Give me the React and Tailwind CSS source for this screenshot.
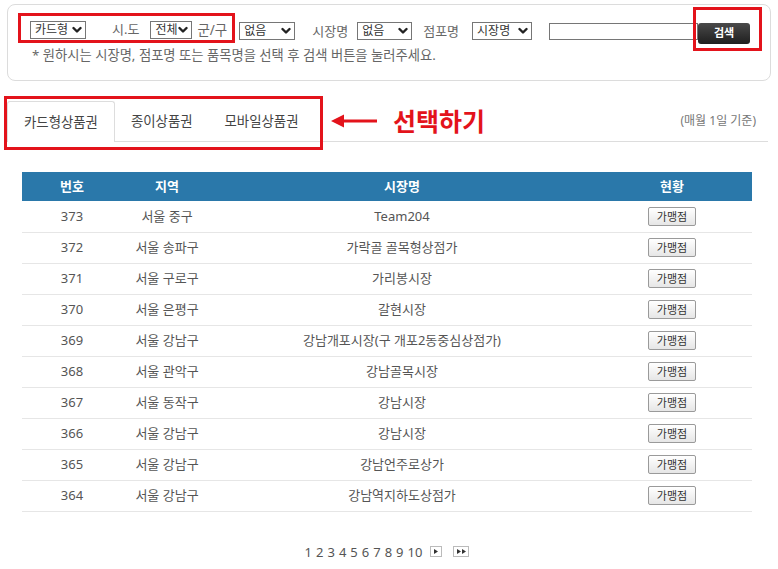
import { useState } from "react";

const rows = [
  [373, "서울 중구", "Team204"],
  [372, "서울 송파구", "가락골 골목형상점가"],
  [371, "서울 구로구", "가리봉시장"],
  [370, "서울 은평구", "갈현시장"],
  [369, "서울 강남구", "강남개포시장(구 개포2동중심상점가)"],
  [368, "서울 관악구", "강남골목시장"],
  [367, "서울 동작구", "강남시장"],
  [366, "서울 강남구", "강남시장"],
  [365, "서울 강남구", "강남언주로상가"],
  [364, "서울 강남구", "강남역지하도상점가"],
];

const Chevron = () => (
  <svg width="10" height="8" viewBox="0 0 10 8" className="shrink-0">
    <path d="M1.5 2 L5 5.5 L8.5 2" fill="none" stroke="#222" strokeWidth="2.4" strokeLinecap="round" strokeLinejoin="round" />
  </svg>
);

const FakeSelect = ({ width, label }) => (
  <div className={`flex h-[18px] items-center border border-[#767676] bg-white pr-[3px] ${width}`}>
    <span className="h-[16px] flex-1 overflow-hidden whitespace-nowrap pl-[4px] text-[12px] leading-[16px] text-[#333]">
      {label}
    </span>
    <Chevron />
  </div>
);

const tabs = ["카드형상품권", "종이상품권", "모바일상품권"];

export default function App() {
  const [active, setActive] = useState(0);

  return (
    <main
      className="min-h-screen w-[778px] bg-white text-[#555]"
      style={{ fontFamily: '"Noto Sans", "Noto Sans CJK KR", sans-serif' }}
    >
      {/* search panel */}
      <section className="mx-[7px] mt-[4px] h-[77px] rounded-[8px] border border-[#dcdcdc] pl-[10px] pt-[8px]">
        <div className="flex items-center">
          <div className="flex h-[30px] items-center border-[3px] border-[#e3131b] pl-[9px] pr-[5px] pt-[3px]">
            <FakeSelect width="w-[56px]" label="카드형" />
            <span className="ml-[26px] text-[13px] text-[#666]">시.도</span>
            <div className="ml-[11px]">
              <FakeSelect width="w-[42px]" label="전체" />
            </div>
            <span className="ml-[5px] text-[13.5px] text-[#666]">군/구</span>
          </div>
          <div className="ml-[4px] mt-[6px] flex items-center">
            <FakeSelect width="w-[56px]" label="없음" />
            <span className="ml-[17px] text-[13px] text-[#666]">시장명</span>
            <div className="ml-[9px]">
              <FakeSelect width="w-[55px]" label="없음" />
            </div>
            <span className="ml-[11px] text-[13px] text-[#666]">점포명</span>
            <div className="ml-[13px]">
              <FakeSelect width="w-[60px]" label="시장명" />
            </div>
            <input className="ml-[17px] h-[17px] w-[149px] border border-[#767676] bg-white outline-none" />
            <div className="relative">
              <button className="h-[21px] w-[52px] rounded-[3px] bg-gradient-to-b from-[#4a4a4a] to-[#1f1f1f] text-[11px] font-bold text-white">
                검색
              </button>
              <div className="pointer-events-none absolute -bottom-[7px] -left-[5px] -right-[12px] -top-[12px] border-[3px] border-[#e3131b]" />
            </div>
          </div>
        </div>
        <p className="ml-[14px] mt-[3px] text-[13.3px] leading-[16px] text-[#666]">
          * 원하시는 시장명, 점포명 또는 품목명을 선택 후 검색 버튼을 눌러주세요.
        </p>
      </section>

      {/* tabs row */}
      <div className="ml-[4px] mr-[10px] mt-[15px] flex items-start">
        <div className="w-[319px] border-[3px] border-[#e3131b] pt-[2px] pb-[5px]">
          <div className="flex h-[41px] border-b border-[#dddddd]">
            {tabs.map((t, i) => (
              <button
                key={t}
                onClick={() => setActive(i)}
                className={
                  i === active
                    ? "-mb-px flex h-[41px] items-center rounded-t-[3px] border border-b-0 border-[#dddddd] bg-white px-[16px] text-[13.4px] text-[#444]"
                    : "flex h-[40px] items-center px-[16px] text-[13.4px] text-[#444]"
                }
              >
                {t}
              </button>
            ))}
          </div>
        </div>
        <div className="flex h-[46px] flex-1 items-center border-b border-[#dddddd] pt-[5px]">
          <svg width="46" height="16" viewBox="0 0 46 16" className="ml-[8px]">
            <line x1="10" y1="8" x2="46" y2="8" stroke="#e3131b" strokeWidth="3" />
            <polygon points="0,8 13,1.5 13,14.5" fill="#e3131b" />
          </svg>
          <span className="ml-[16px] text-[25px] font-bold leading-none text-[#e3131b]">선택하기</span>
          <span className="ml-auto mr-[12px] text-[12px] text-[#777]">(매월 1일 기준)</span>
        </div>
      </div>

      {/* table */}
      <table className="ml-[22px] mt-[22px] w-[730px] table-fixed border-collapse text-[13px]">
        <colgroup>
          <col className="w-[100px]" />
          <col className="w-[90px]" />
          <col className="w-[380px]" />
          <col className="w-[160px]" />
        </colgroup>
        <thead>
          <tr className="h-[29px] bg-[#2a78aa] text-white">
            <th className="font-bold">번호</th>
            <th className="font-bold">지역</th>
            <th className="font-bold">시장명</th>
            <th className="font-bold">현황</th>
          </tr>
        </thead>
        <tbody>
          {rows.map(([no, area, name]) => (
            <tr key={no} className="h-[31px] border-b border-[#e6e6e6] text-center text-[#555]">
              <td>{no}</td>
              <td className="whitespace-nowrap">{area}</td>
              <td className="whitespace-nowrap">{name}</td>
              <td>
                <button className="h-[19px] w-[48px] rounded-[2px] border border-[#9a9a9a] bg-gradient-to-b from-white to-[#e6e6e6] text-[11px] leading-none text-[#333]">
                  가맹점
                </button>
              </td>
            </tr>
          ))}
        </tbody>
      </table>

      {/* pagination */}
      <div className="mt-[32px] flex items-center justify-center pr-[4px]">
        <div className="flex gap-[4px] text-[13px] leading-[16px] text-[#555]">
          {[1, 2, 3, 4, 5, 6, 7, 8, 9, 10].map((n) => (
            <span key={n}>{n}</span>
          ))}
        </div>
        <span className="ml-[8px] flex h-[11px] w-[12px] items-center justify-center border border-[#bbb] bg-white">
          <svg width="4" height="5" viewBox="0 0 4 5"><polygon points="0,0 4,2.5 0,5" fill="#333" /></svg>
        </span>
        <span className="ml-[11px] flex h-[11px] w-[16px] items-center justify-center gap-[1px] border border-[#bbb] bg-white">
          <svg width="4" height="5" viewBox="0 0 4 5"><polygon points="0,0 4,2.5 0,5" fill="#333" /></svg>
          <svg width="4" height="5" viewBox="0 0 4 5"><polygon points="0,0 4,2.5 0,5" fill="#333" /></svg>
        </span>
      </div>
    </main>
  );
}
